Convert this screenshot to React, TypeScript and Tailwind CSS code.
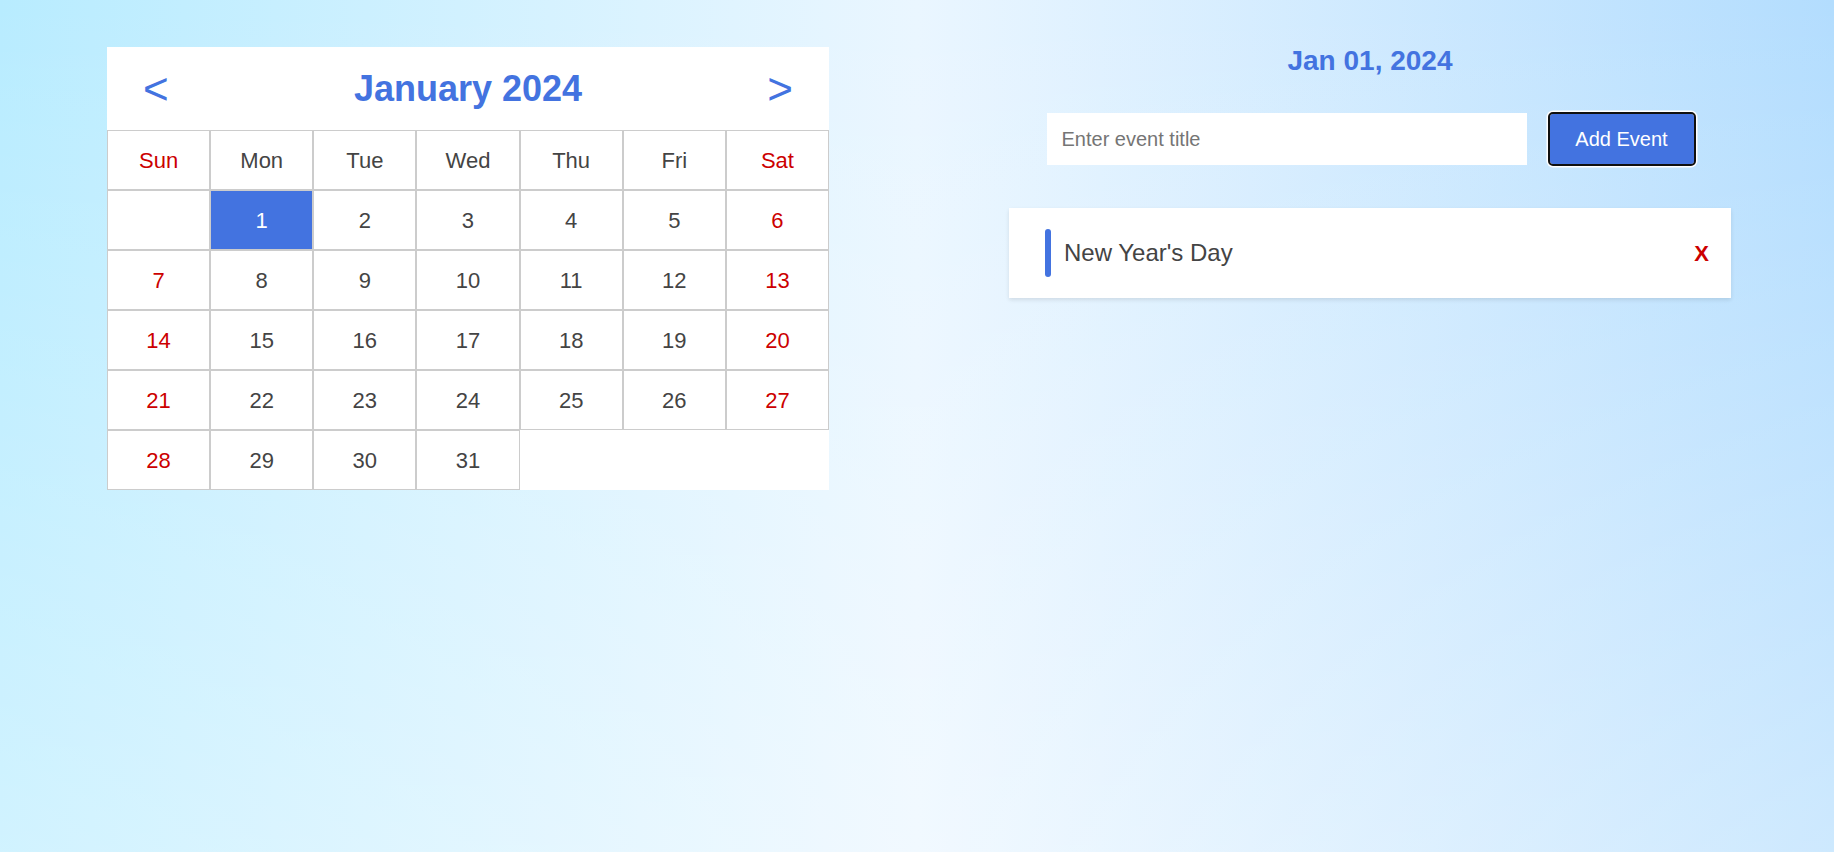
import React, { useState } from 'react';

type CalEvent = { id: number; date: string; title: string };

const WEEKDAYS = ['Sun', 'Mon', 'Tue', 'Wed', 'Thu', 'Fri', 'Sat'];
const MONTHS = ['January', 'February', 'March', 'April', 'May', 'June', 'July', 'August', 'September', 'October', 'November', 'December'];
const SHORT = ['Jan', 'Feb', 'Mar', 'Apr', 'May', 'Jun', 'Jul', 'Aug', 'Sep', 'Oct', 'Nov', 'Dec'];

const keyOf = (y: number, m: number, d: number) => `${y}-${m + 1}-${d}`;

const App: React.FC = () => {
    const [year, setYear] = useState(2024);
    const [month, setMonth] = useState(0);
    const [selected, setSelected] = useState({ y: 2024, m: 0, d: 1 });
    const [title, setTitle] = useState('');
    const [events, setEvents] = useState<CalEvent[]>([
        { id: 1, date: keyOf(2024, 0, 1), title: "New Year's Day" },
    ]);

    const firstDay = new Date(year, month, 1).getDay();
    const daysInMonth = new Date(year, month + 1, 0).getDate();

    const prevMonth = () => {
        if (month === 0) { setMonth(11); setYear(year - 1); } else setMonth(month - 1);
    };
    const nextMonth = () => {
        if (month === 11) { setMonth(0); setYear(year + 1); } else setMonth(month + 1);
    };

    const selectedKey = keyOf(selected.y, selected.m, selected.d);
    const dayEvents = events.filter(e => e.date === selectedKey);

    const addEvent = () => {
        if (!title.trim()) return;
        setEvents(ev => [...ev, { id: Date.now(), date: selectedKey, title: title.trim() }]);
        setTitle('');
    };

    const cells: (number | null)[] = [];
    for (let i = 0; i < firstDay; i++) cells.push(null);
    for (let d = 1; d <= daysInMonth; d++) cells.push(d);

    return (
        <div className="min-h-[852px] w-full font-['Liberation_Sans',Arial,sans-serif] bg-[linear-gradient(to_bottom,rgba(255,255,255,0),rgba(255,255,255,0.35)),linear-gradient(to_right,#b8ecff,#eaf6ff_50%,#b3ddfe)]">
            <div className="flex items-start justify-between pl-[107px] pr-[103px] pt-[44px]">
                {/* calendar */}
                <div className="mt-[3px] w-[722px] bg-white">
                    <div className="flex h-[83px] items-center justify-between px-[36px]">
                        <button onClick={prevMonth} className="text-[44px] leading-none text-[#4373e0]">&lt;</button>
                        <h1 className="text-[36px] font-bold text-[#4373e0]">{MONTHS[month]} {year}</h1>
                        <button onClick={nextMonth} className="text-[44px] leading-none text-[#4373e0]">&gt;</button>
                    </div>
                    <div className="grid grid-cols-7">
                        {WEEKDAYS.map((w, i) => (
                            <div
                                key={w}
                                className={`flex h-[60px] items-center justify-center border border-[#ccc] text-[22px] ${i === 0 || i === 6 ? 'text-[#cc0000]' : 'text-[#444]'}`}
                            >
                                {w}
                            </div>
                        ))}
                        {cells.map((d, i) => {
                            if (d === null) return <div key={`e${i}`} className="h-[60px] border border-[#ccc]" />;
                            const col = i % 7;
                            const isSel = selected.y === year && selected.m === month && selected.d === d;
                            const color = isSel ? 'bg-[#4373e0] text-white' : col === 0 || col === 6 ? 'text-[#cc0000]' : 'text-[#444]';
                            return (
                                <div
                                    key={d}
                                    onClick={() => setSelected({ y: year, m: month, d })}
                                    className={`flex h-[60px] cursor-pointer items-center justify-center border border-[#ccc] text-[22px] ${color}`}
                                >
                                    {d}
                                </div>
                            );
                        })}
                    </div>
                </div>

                {/* events */}
                <div className="flex w-[722px] flex-col items-center">
                    <h2 className="mt-[1px] text-[28px] leading-[32px] font-bold text-[#4373e0]">
                        {SHORT[selected.m]} {String(selected.d).padStart(2, '0')}, {selected.y}
                    </h2>
                    <div className="mt-[36px] flex items-center">
                        <input
                            value={title}
                            onChange={e => setTitle(e.target.value)}
                            placeholder="Enter event title"
                            className="h-[52px] w-[480px] bg-white px-[15px] text-[20px] text-[#444] outline-none placeholder:text-[#757575]"
                        />
                        <button
                            onClick={addEvent}
                            className="ml-[23px] h-[50px] w-[144px] rounded-[3px] bg-[#4373e0] text-[20px] text-white outline-2 outline-[#101010] shadow-[0_0_0_3.5px_white]"
                        >
                            Add Event
                        </button>
                    </div>
                    <div className="mt-[43px] w-full">
                        {dayEvents.map(ev => (
                            <div
                                key={ev.id}
                                className="mb-[10px] flex items-center justify-between bg-white py-[21px] pl-[36px] pr-[22px] shadow-[0_2px_4px_rgba(0,0,0,0.1)]"
                            >
                                <div className="flex items-center">
                                    <span className="h-[48px] w-[6px] rounded-full bg-[#4373e0]" />
                                    <span className="ml-[13px] text-[24px] text-[#444]">{ev.title}</span>
                                </div>
                                <button
                                    onClick={() => setEvents(list => list.filter(x => x.id !== ev.id))}
                                    className="text-[22px] font-bold text-[#cc0000]"
                                >
                                    X
                                </button>
                            </div>
                        ))}
                    </div>
                </div>
            </div>
        </div>
    );
};

export default App;
